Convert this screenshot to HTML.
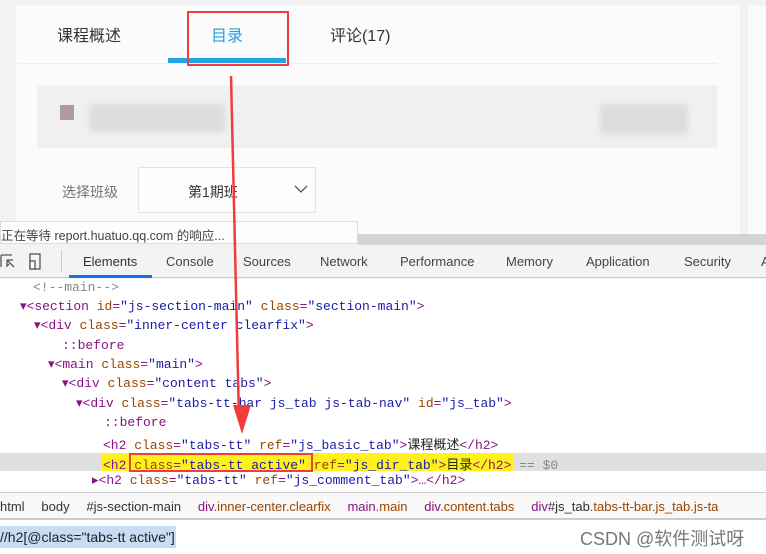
<!DOCTYPE html>
<html><head><meta charset="utf-8"><style>
*{margin:0;padding:0;box-sizing:border-box}
body{width:766px;height:554px;overflow:hidden;position:relative;background:#f2f2f2;font-family:"Liberation Sans","Noto Sans CJK SC",sans-serif}
.a{position:absolute;white-space:nowrap}
.code{font-family:"Liberation Mono","Noto Sans CJK SC",monospace;font-size:13px;color:#881280;letter-spacing:0}
.an{color:#994500}.av{color:#1a1aa6}.tx{color:#222}.gr{color:#888}
.dt{font-size:13px;color:#444}
</style></head><body>
<div class="a" style="left:16px;top:6px;width:724px;height:232px;background:#fbfbfb"></div>
<div class="a" style="left:748px;top:6px;width:18px;height:232px;background:#fbfbfb"></div>
<div class="a" style="left:57px;top:22px;font-size:16px;color:#333">课程概述</div>
<div class="a" style="left:211px;top:22px;font-size:16px;color:#2a9de6">目录</div>
<div class="a" style="left:330px;top:22px;font-size:16px;color:#333">评论(17)</div>
<div class="a" style="left:17px;top:63px;width:700px;height:1px;background:#eee"></div>
<div class="a" style="left:168px;top:58px;width:118px;height:5px;background:#22a3ea"></div>
<div class="a" style="left:187px;top:11px;width:102px;height:55px;border:2px solid #f23c3c"></div>
<div class="a" style="left:37px;top:85px;width:680px;height:63px;background:#f0f0f0"></div>
<div class="a" style="left:60px;top:105px;width:14px;height:15px;background:#b09a9a"></div>
<div class="a" style="left:90px;top:104px;width:135px;height:28px;background:#dcdcdc;filter:blur(3px)"></div>
<div class="a" style="left:600px;top:104px;width:88px;height:30px;background:#dcdcdc;filter:blur(3px)"></div>
<div class="a" style="left:62px;top:182px;font-size:14px;color:#777">选择班级</div>
<div class="a" style="left:138px;top:167px;width:178px;height:46px;border:1px solid #e4e4e4;background:#fdfdfd"></div>
<div class="a" style="left:188px;top:182px;font-size:14px;color:#333">第1期班</div>
<svg class="a" style="left:293px;top:183px" width="16" height="12"><path d="M2 3 L8 9 L14 3" fill="none" stroke="#555" stroke-width="1.3"/></svg>
<div class="a" style="left:0;top:221px;width:358px;height:23px;background:#fdfdfd;border:1px solid #ddd;font-size:12.5px;color:#444;padding:3px 0 0 0">正在等待 report.huatuo.qq.com 的响应...</div>
<div class="a" style="left:358px;top:234px;width:408px;height:11px;background:#d4d4d4"></div>
<div class="a" style="left:0;top:245px;width:766px;height:33px;background:#f3f3f3;border-bottom:1px solid #ccc"></div>
<svg class="a" style="left:0;top:252px" width="52" height="20"><path d="M1 3 H12 M1 3 V15 M7 8 L14 15 M7 8 V14 L9 12 M7 8 H13" fill="none" stroke="#555" stroke-width="1.3"/><rect x="30" y="2" width="10" height="15" fill="none" stroke="#555" stroke-width="1.3"/><rect x="30" y="9" width="5" height="8" fill="#fff" stroke="#555" stroke-width="1.3"/></svg>
<div class="a" style="left:61px;top:250px;width:1px;height:22px;background:#ccc"></div>
<div class="a dt" style="left:83px;top:254px;color:#333">Elements</div>
<div class="a" style="left:69px;top:275px;width:83px;height:3px;background:#1a73e8"></div>
<div class="a dt" style="left:166px;top:254px">Console</div>
<div class="a dt" style="left:243px;top:254px">Sources</div>
<div class="a dt" style="left:320px;top:254px">Network</div>
<div class="a dt" style="left:400px;top:254px">Performance</div>
<div class="a dt" style="left:506px;top:254px">Memory</div>
<div class="a dt" style="left:586px;top:254px">Application</div>
<div class="a dt" style="left:684px;top:254px">Security</div>
<div class="a dt" style="left:761px;top:254px">A</div>
<div class="a" style="left:0;top:279px;width:766px;height:213px;background:#fff"></div>
<div class="a" style="left:0;top:453px;width:766px;height:18px;background:#e0e0e0"></div>
<div class="a" style="left:102px;top:453px;width:411px;height:18px;background:#fff21a"></div>
<div class="a" style="left:129px;top:453px;width:184px;height:19px;border:2px solid #f23c3c"></div>
<div class="code">
<div class="a gr" style="left:33px;top:280px">&lt;!--main--&gt;</div>
<div class="a" style="left:20px;top:299px">▾&lt;section <span class="an">id</span>=<span class="av">"js-section-main"</span> <span class="an">class</span>=<span class="av">"section-main"</span>&gt;</div>
<div class="a" style="left:34px;top:318px">▾&lt;div <span class="an">class</span>=<span class="av">"inner-center clearfix"</span>&gt;</div>
<div class="a" style="left:62px;top:338px">::before</div>
<div class="a" style="left:48px;top:357px">▾&lt;main <span class="an">class</span>=<span class="av">"main"</span>&gt;</div>
<div class="a" style="left:62px;top:376px">▾&lt;div <span class="an">class</span>=<span class="av">"content tabs"</span>&gt;</div>
<div class="a" style="left:76px;top:396px">▾&lt;div <span class="an">class</span>=<span class="av">"tabs-tt-bar js_tab js-tab-nav"</span> <span class="an">id</span>=<span class="av">"js_tab"</span>&gt;</div>
<div class="a" style="left:104px;top:415px">::before</div>
<div class="a" style="left:103px;top:434px">&lt;h2 <span class="an">class</span>=<span class="av">"tabs-tt"</span> <span class="an">ref</span>=<span class="av">"js_basic_tab"</span>&gt;<span class="tx">课程概述</span>&lt;/h2&gt;</div>
<div class="a" style="left:103px;top:454px">&lt;h2 <span class="an">class</span>=<span class="av">"tabs-tt active"</span> <span class="an">ref</span>=<span class="av">"js_dir_tab"</span>&gt;<span class="tx">目录</span>&lt;/h2&gt; <span class="gr">== $0</span></div>
<div class="a" style="left:92px;top:473px">▸&lt;h2 <span class="an">class</span>=<span class="av">"tabs-tt"</span> <span class="an">ref</span>=<span class="av">"js_comment_tab"</span>&gt;…&lt;/h2&gt;</div>
</div>
<div class="a" style="left:0;top:492px;width:766px;height:27px;background:#f8f8f8;border-top:1px solid #ccc;border-bottom:1px solid #ccc"></div>
<div class="a" style="left:0;top:499px;font-size:13px;color:#333;word-spacing:2px">html&nbsp;&nbsp; body&nbsp;&nbsp; #js-section-main&nbsp;&nbsp; <span style="color:#881280">div</span><span style="color:#994500">.inner-center.clearfix</span>&nbsp;&nbsp; <span style="color:#881280">main</span><span style="color:#994500">.main</span>&nbsp;&nbsp; <span style="color:#881280">div</span><span style="color:#994500">.content.tabs</span>&nbsp;&nbsp; <span style="color:#881280">div</span>#js_tab<span style="color:#994500">.tabs-tt-bar.js_tab.js-ta</span></div>
<div class="a" style="left:0;top:519px;width:766px;height:35px;background:#fff;border-top:1px solid #ccc"></div>
<div class="a" style="left:0;top:526px;width:176px;height:22px;background:#c8dcf4"></div>
<div class="a" style="left:0;top:529px;font-size:14px;color:#222">//h2[@class="tabs-tt active"]</div>
<div class="a" style="left:580px;top:525px;font-size:18px;color:#777">CSDN @软件测试呀</div>
<svg class="a" style="left:0;top:0" width="766" height="554"><path d="M231 76 L239 420" stroke="#f23c3c" stroke-width="2.5" fill="none"/><path d="M233 405 L251 405 L242 434 Z" fill="#f23c3c"/></svg>
</body></html>
